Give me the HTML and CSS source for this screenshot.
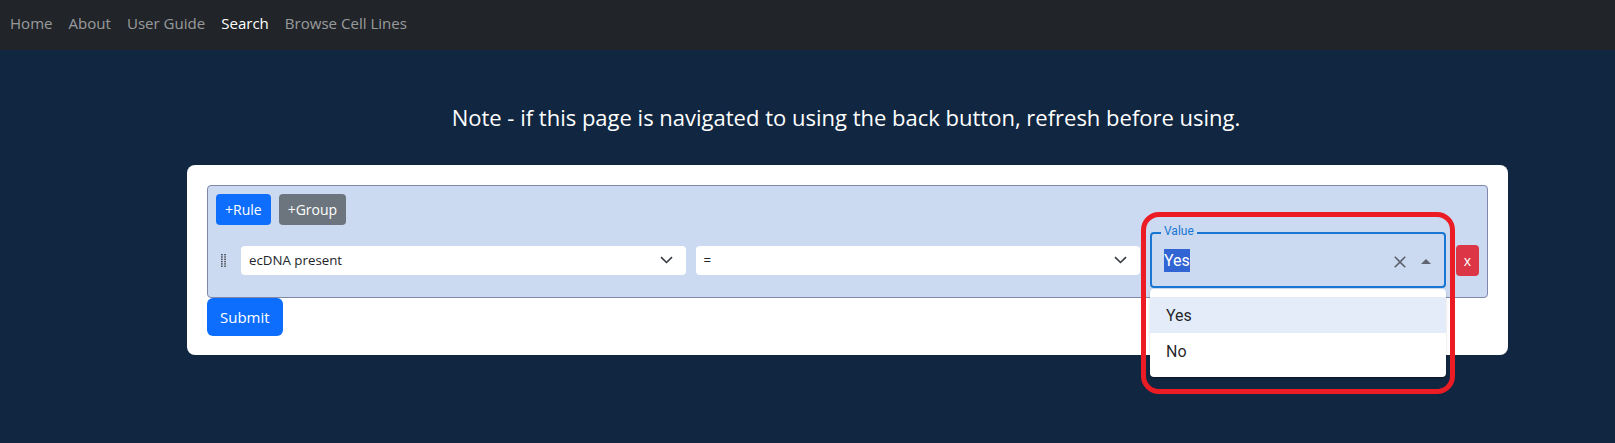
FILE: index.html
```html
<!DOCTYPE html>
<html lang="en">
<head>
<meta charset="utf-8">
<title>Search</title>
<link rel="stylesheet" href="styles.css">
</head>
<body>
<nav class="navbar">
  <a class="nav-link" href="#">Home</a>
  <a class="nav-link" href="#">About</a>
  <a class="nav-link" href="#">User Guide</a>
  <a class="nav-link active" href="#">Search</a>
  <a class="nav-link" href="#">Browse Cell Lines</a>
</nav>
<main class="content">
  <p class="note">Note - if this page is navigated to using the back button, refresh before using.</p>
  <div class="card">
    <div class="group">
      <div class="group-actions">
        <button class="btn btn-sm btn-primary">+Rule</button>
        <button class="btn btn-sm btn-secondary">+Group</button>
      </div>
      <div class="rule">
        <span class="drag-handle">
          <svg width="5" height="13" viewBox="0 0 5 13">
            <g fill="#4a4f56">
              <rect x="0" y="0" width="1.7" height="1.4"/><rect x="3.2" y="0" width="1.7" height="1.4"/>
              <rect x="0" y="2.3" width="1.7" height="1.4"/><rect x="3.2" y="2.3" width="1.7" height="1.4"/>
              <rect x="0" y="4.6" width="1.7" height="1.4"/><rect x="3.2" y="4.6" width="1.7" height="1.4"/>
              <rect x="0" y="6.9" width="1.7" height="1.4"/><rect x="3.2" y="6.9" width="1.7" height="1.4"/>
              <rect x="0" y="9.2" width="1.7" height="1.4"/><rect x="3.2" y="9.2" width="1.7" height="1.4"/>
              <rect x="0" y="11.5" width="1.7" height="1.4"/><rect x="3.2" y="11.5" width="1.7" height="1.4"/>
            </g>
          </svg>
        </span>
        <div class="select">
          <span>ecDNA present</span>
          <svg class="chevron" width="13" height="8" viewBox="0 0 13 8"><polyline points="1,1.2 6.5,6.5 12,1.2" fill="none" stroke="#343a40" stroke-width="1.6"/></svg>
        </div>
        <div class="select">
          <span>=</span>
          <svg class="chevron" width="13" height="8" viewBox="0 0 13 8"><polyline points="1,1.2 6.5,6.5 12,1.2" fill="none" stroke="#343a40" stroke-width="1.6"/></svg>
        </div>
        <div class="value-field">
          <span class="value-label">Value</span>
          <span class="value-input"><span class="selected">Yes</span></span>
          <span class="adorn">
            <svg class="clear-icon" width="20" height="20" viewBox="0 0 24 24"><path d="M19 6.41 17.59 5 12 10.59 6.41 5 5 6.41 10.59 12 5 17.59 6.41 19 12 13.41 17.59 19 19 17.59 13.41 12z" fill="#5f6570"/></svg>
            <svg class="arrow-icon" width="24" height="24" viewBox="0 0 24 24"><path d="m7 14 5-5 5 5z" fill="#5f6570"/></svg>
          </span>
          <ul class="listbox">
            <li class="option focused">Yes</li>
            <li class="option">No</li>
          </ul>
          <div class="annotation"></div>
        </div>
        <button class="btn btn-danger btn-remove">x</button>
      </div>
    </div>
    <button class="btn btn-primary btn-submit">Submit</button>
  </div>
</main>
</body>
</html>
```

FILE: styles.css
```css
html {
  min-height: 100%;
  background: #112640;
}

body {
  margin: 0;
  min-height: 100vh;
  background: #112640;
  font-family: "Open Sans", sans-serif;
}

.navbar {
  height: 50px;
  background: #212529;
  display: flex;
  align-items: center;
  padding: 0 0 5px 2px;
  box-sizing: border-box;
}

.nav-link {
  color: rgba(255, 255, 255, 0.55);
  font-size: 15.05px;
  line-height: 24px;
  padding: 0 8px;
  text-decoration: none;
}

.nav-link.active {
  color: #fff;
}

.content {
  margin-left: 187px;
  width: 1321px;
  padding-bottom: 100px;
}

.note {
  margin: 51px 0 0;
  padding-right: 3px;
  color: #fff;
  font-size: 22px;
  line-height: 32px;
  text-align: center;
}

.card {
  margin-top: 32px;
  background: #fff;
  border-radius: 8px;
  padding: 20px 20px 19px;
}

.group {
  background: #ccdaf1;
  border: 1px solid #8087aa;
  border-radius: 4px;
  padding: 8px 8px 9px 8px;
}

.group-actions {
  display: flex;
  gap: 8px;
}

.btn {
  font-family: "Open Sans", sans-serif;
  border: 1px solid transparent;
  color: #fff;
  cursor: pointer;
  margin: 0;
}

.btn-sm {
  font-size: 14px;
  line-height: 21px;
  padding: 4px 8px;
  border-radius: 4px;
}

.btn-primary {
  background: #0d6efd;
}

.btn-secondary {
  background: #6c757d;
}

.btn-danger {
  background: #dc3545;
}

.rule {
  display: flex;
  align-items: center;
  height: 56px;
  margin-top: 7px;
}

.drag-handle {
  display: flex;
  width: 5px;
  height: 13px;
  margin: 0 15px 0 5px;
}

.select {
  flex: 1;
  height: 29px;
  margin-right: 10px;
  background: #fff;
  border-radius: 4px;
  display: flex;
  align-items: center;
  justify-content: space-between;
  padding: 0 13px 0 8px;
  box-sizing: border-box;
  font-size: 13.3px;
  color: #212529;
}

.value-field {
  position: relative;
  width: 296px;
  height: 56px;
  box-sizing: border-box;
  border: 2px solid #1976d2;
  border-radius: 4px;
  display: flex;
  align-items: center;
  padding: 0 6px 0 12px;
  margin-right: 10px;
  font-family: Roboto, sans-serif;
}

.value-label {
  position: absolute;
  top: -9px;
  left: 9px;
  padding: 0 3px;
  background: #ccdaf1;
  color: #1976d2;
  font-size: 12px;
  line-height: 12px;
}

.value-input {
  flex: 1;
  display: flex;
}

.selected {
  background: #3165d3;
  color: #fff;
  font-size: 16px;
  line-height: 23px;
}

.adorn {
  display: flex;
  align-items: center;
  gap: 4px;
  margin-top: 3px;
}

.adorn svg {
  display: block;
}

.listbox {
  position: absolute;
  top: calc(100% + 3px);
  left: -2px;
  width: 296px;
  box-sizing: border-box;
  margin: 0;
  padding: 8px 0;
  list-style: none;
  background: #fff;
  border-radius: 4px;
  box-shadow: 0 2px 1px -1px rgba(0, 0, 0, 0.2), 0 1px 1px 0 rgba(0, 0, 0, 0.14), 0 1px 3px 0 rgba(0, 0, 0, 0.12);
  z-index: 5;
}

.option {
  height: 36px;
  display: flex;
  align-items: center;
  padding: 0 16px;
  font-family: Roboto, sans-serif;
  font-size: 16px;
  color: rgba(0, 0, 0, 0.87);
}

.option.focused {
  background: #e3ecf8;
}

.annotation {
  position: absolute;
  left: -11px;
  top: -22px;
  width: 314px;
  height: 182px;
  box-sizing: border-box;
  border: 5px solid #ec1c24;
  border-radius: 18px;
  pointer-events: none;
  z-index: 6;
}

.btn-remove {
  width: 23px;
  padding: 4px 0;
  font-size: 14px;
  line-height: 21px;
  border-radius: 4px;
}

.btn-submit {
  margin-top: 0;
  padding: 6px 12px;
  font-size: 15px;
  line-height: 24px;
  border-radius: 6px;
}
```
